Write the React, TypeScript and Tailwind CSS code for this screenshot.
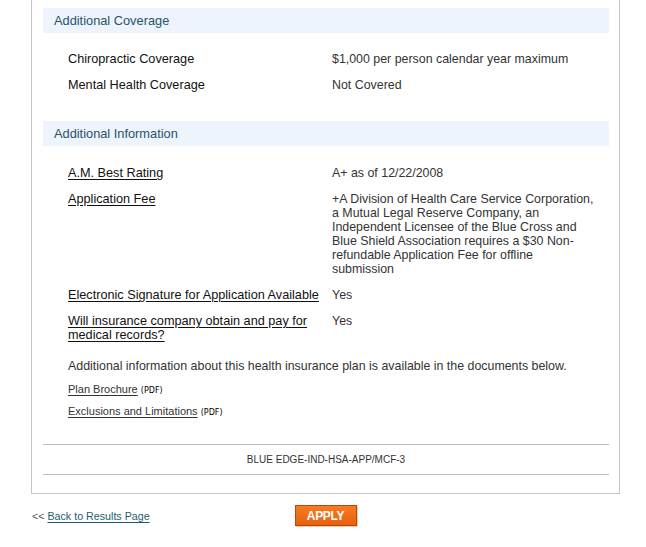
const font = { fontFamily: '"Liberation Sans", Arial, sans-serif' };

type Row = { label: string; value: string; link?: boolean };

const coverage: Row[] = [
  { label: "Chiropractic Coverage", value: "$1,000 per person calendar year maximum" },
  { label: "Mental Health Coverage", value: "Not Covered" },
];

const info: Row[] = [
  { label: "A.M. Best Rating", value: "A+ as of 12/22/2008", link: true },
  {
    label: "Application Fee",
    value:
      "+A Division of Health Care Service Corporation, a Mutual Legal Reserve Company, an Independent Licensee of the Blue Cross and Blue Shield Association requires a $30 Non-refundable Application Fee for offline submission",
    link: true,
  },
  { label: "Electronic Signature for Application Available", value: "Yes", link: true },
  { label: "Will insurance company obtain and pay for medical records?", value: "Yes", link: true },
];

function SectionHeader({ title }: { title: string }) {
  return (
    <div className="h-[25px] flex items-center pl-[11px] bg-[#edf4fb] text-[12.8px] text-[#2a526d]">
      {title}
    </div>
  );
}

function Rows({ rows }: { rows: Row[] }) {
  return (
    <div className="pl-[25px]">
      {rows.map((r) => (
        <div key={r.label} className="grid grid-cols-[264px_262px] py-[6px] leading-[14px]">
          <span className={`pr-[4px] text-[12.7px] text-[#111] ${r.link ? "underline underline-offset-2" : ""}`}>
            {r.label}
          </span>
          <span className="text-[12.4px] text-[#333]">{r.value}</span>
        </div>
      ))}
    </div>
  );
}

function PdfLink({ name }: { name: string }) {
  return (
    <div className="text-[11px] leading-[14px] text-[#333]">
      <span className="underline underline-offset-2">{name}</span>{" "}
      <span className="text-[8px] text-black" style={{ fontFamily: '"DejaVu Sans", Verdana, sans-serif' }}>
        (PDF)
      </span>
    </div>
  );
}

export default function App() {
  return (
    <div className="w-[646px] h-[547px] bg-white" style={font}>
      <div className="ml-[31px] w-[589px] border-x border-b border-[#c6c6c6] pt-[8px] pl-[11px] pr-[10px] pb-[18px]">
        <SectionHeader title="Additional Coverage" />
        <div className="pt-[13px] pb-[23px]">
          <Rows rows={coverage} />
        </div>
        <SectionHeader title="Additional Information" />
        <div className="pt-[14px]">
          <Rows rows={info} />
        </div>
        <div className="pl-[25px] pt-[11px]">
          <p className="text-[12.4px] leading-[14px] text-[#333]">
            Additional information about this health insurance plan is available in the documents below.
          </p>
          <div className="mt-[9px] flex flex-col gap-[6px]">
            <PdfLink name="Plan Brochure" />
            <PdfLink name="Exclusions and Limitations" />
          </div>
        </div>
        <div className="mt-[24px] border-t border-b border-[#bdbdbd] h-[31px] flex items-center justify-center text-[10px] text-[#333]">
          BLUE EDGE-IND-HSA-APP/MCF-3
        </div>
      </div>
      <div className="ml-[31px] w-[589px] mt-[11px] grid grid-cols-[1fr_auto_1fr] items-center">
        <div className="text-[10.7px] pl-[1px] pt-[2px]">
          <span className="text-[#555]">&lt;&lt; </span>
          <span className="text-[#1f5c70] underline underline-offset-2">Back to Results Page</span>
        </div>
        <button
          type="button"
          className="w-[62px] h-[21px] bg-gradient-to-b from-[#f67b22] to-[#e8600c] border border-[#b44a0a] text-white text-[12px] font-bold tracking-tight shadow-[1px_1px_0_#f6c9a8]"
          style={{ fontFamily: '"Liberation Sans Narrow", "Liberation Sans", Arial, sans-serif' }}
        >
          APPLY
        </button>
        <div />
      </div>
    </div>
  );
}
